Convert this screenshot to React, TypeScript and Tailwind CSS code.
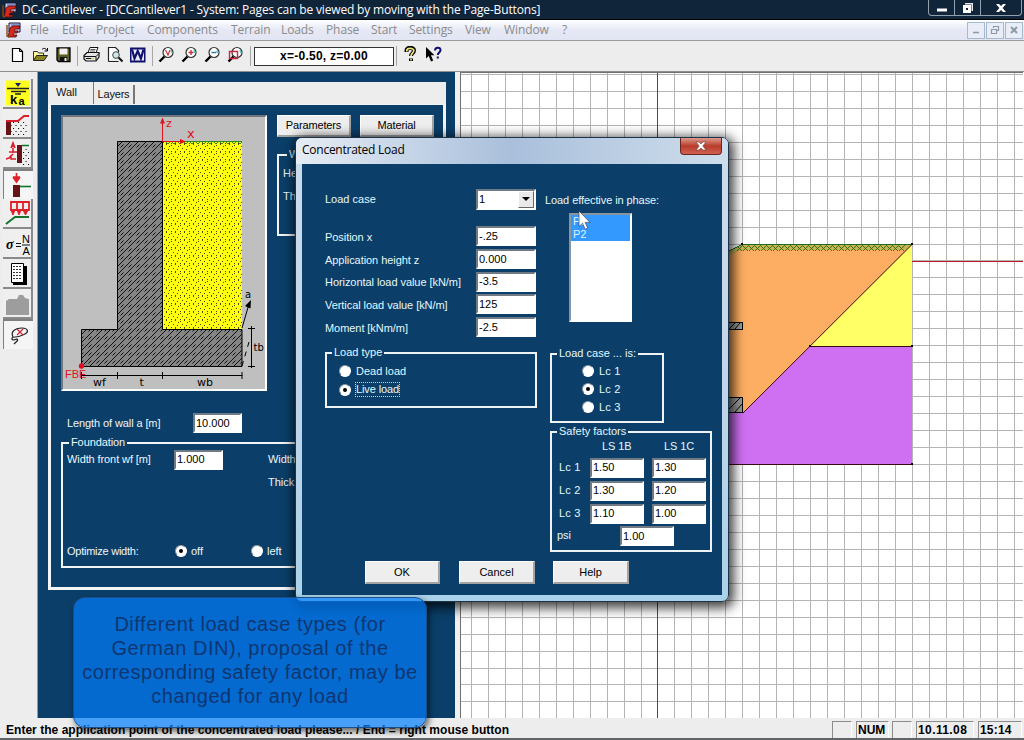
import React from 'react';

const range = (n: number) => Array.from({ length: n }, (_, i) => i);

/* ---------- shared controls ---------- */

function Field({ value, className }: { value: string; className: string }) {
  return (
    <div
      className={`flex h-5 items-center border-2 border-t-[#6f7a85] border-l-[#6f7a85] border-r-white border-b-white bg-white pl-px text-black whitespace-nowrap ${className}`}
    >
      <span>{value}</span>
    </div>
  );
}

function PushButton({ label, className }: { label: string; className: string }) {
  return (
    <div
      className={`flex items-center justify-center border-t border-l border-r-2 border-b-2 border-t-white border-l-white border-r-[#a3a3a3] border-b-[#a3a3a3] bg-[#eeeeee] text-black ${className}`}
    >
      {label}
    </div>
  );
}

function Radio({ checked }: { checked?: boolean }) {
  return (
    <span className="flex h-3 w-3 shrink-0 items-center justify-center rounded-full border border-t-[#8d99a5] border-l-[#8d99a5] border-r-white border-b-white bg-white">
      {checked && <span className="h-1 w-1 rounded-full bg-black" />}
    </span>
  );
}

/* ---------- title and menu ---------- */

function AppIcon() {
  return (
    <svg width="16" height="16" viewBox="0 0 16 16">
      <path d="M3 1h11v9H3z" fill="#c9c9e8" stroke="#15153c" />
      <path d="M5 3h8M5 5h8" stroke="#4a55a8" />
      <path d="M2 15l2-9 3-2h7l-1 3H9l-1 2h4l-1 2H8l-1 2h4l-1 2z" fill="#d8281c" stroke="#4d0707" strokeWidth="0.8" />
      <path d="M1 3v11l2 1" fill="none" stroke="#8a4a10" strokeWidth="1.4" />
    </svg>
  );
}

function TitleBar() {
  return (
    <div className="flex h-5 shrink-0 items-start border-b border-black bg-[#10243a] pl-0.5 font-['Open_Sans','Noto_Sans',sans-serif]">
      <div className="flex h-[19px] w-[20px] items-center">
        <AppIcon />
      </div>
      <div className="flex h-[19px] flex-1 items-center text-[12px] leading-none tracking-[-0.162px] whitespace-nowrap text-white">
        DC-Cantilever - [DCCantilever1 - System: Pages can be viewed by moving with the Page-Buttons]
      </div>
      <div className="mr-[2px] flex h-4 w-[94px] rounded-b-[4px] border border-t-0 border-[#93a0ad]">
        <div className="flex w-[26px] items-center justify-center border-r border-[#93a0ad]">
          <svg width="12" height="12" viewBox="0 0 12 12">
            <path d="M1 6.500h10v3H1z" fill="#fff" />
          </svg>
        </div>
        <div className="flex w-[26px] items-center justify-center border-r border-[#93a0ad]">
          <svg width="12" height="12" viewBox="0 0 12 12">
            <path d="M3 1h8v8H9.500V2.500H3z" fill="#e8e8e8" />
            <path d="M1 3h8v8H1zM4 6v2h2V6z" fill="#fff" fillRule="evenodd" />
          </svg>
        </div>
        <div className="flex flex-1 items-center justify-center">
          <svg width="12" height="12" viewBox="0 0 12 12">
            <path d="M1 2h3l2 2 2-2h3L7.600 6 11 10H8L6 8l-2 2H1l3.400-4z" fill="#fff" />
          </svg>
        </div>
      </div>
    </div>
  );
}

function MenuBar() {
  const box =
    'flex h-[17px] w-[18px] items-center justify-center border border-[#a9b9cc] bg-[#e8edf7]';
  return (
    <div className="flex h-[21px] shrink-0 items-center border-b border-[#9b9b9b] bg-linear-to-b from-white via-[#e6e8f5] to-[#e2e5f3] pl-1.5 font-['Open_Sans','Noto_Sans',sans-serif] text-[12px] leading-none tracking-[-0.1px] whitespace-nowrap text-[#8b8b8b]">
      <div className="w-6">
        <AppIcon />
      </div>
      <span className="w-8">File</span>
      <span className="w-[34px]">Edit</span>
      <span className="w-[51px]">Project</span>
      <span className="w-[84px]">Components</span>
      <span className="w-[50px]">Terrain</span>
      <span className="w-[45px]">Loads</span>
      <span className="w-[45px]">Phase</span>
      <span className="w-[38px]">Start</span>
      <span className="w-14">Settings</span>
      <span className="w-[39px]">View</span>
      <span className="w-[58px]">Window</span>
      <span className="flex-1">?</span>
      <div className="mr-px flex gap-px">
        <div className={box}>
          <svg width="10" height="10" viewBox="0 0 10 10">
            <path d="M2 7.500h6" stroke="#8d99a8" strokeWidth="1.500" />
          </svg>
        </div>
        <div className={box}>
          <svg width="10" height="10" viewBox="0 0 10 10" fill="none" stroke="#8d99a8">
            <path d="M3.500 3V1.500h5v4H7M1.500 4.500h5v4h-5z" strokeWidth="1.200" />
          </svg>
        </div>
        <div className={box}>
          <svg width="10" height="10" viewBox="0 0 10 10">
            <path d="M2 2l6 6M8 2L2 8" stroke="#8d99a8" strokeWidth="2" />
          </svg>
        </div>
      </div>
    </div>
  );
}

/* ---------- main toolbar ---------- */

function Slot({ children }: { children: React.ReactNode }) {
  return (
    <div className="flex w-[23px] shrink-0 items-center justify-center pb-[3px]">
      <svg width="17" height="17" viewBox="0 0 17 17">
        {children}
      </svg>
    </div>
  );
}

function Magnifier({ children }: { children?: React.ReactNode }) {
  return (
    <Slot>
      <path d="M6.500 10.500L1.500 15.500" stroke="#000" strokeWidth="2.400" />
      <circle cx="10" cy="6.500" r="5" fill="#fff" stroke="#333" strokeWidth="1.200" />
      <path d="M13 4l1 3" stroke="#58c8c0" strokeWidth="1.500" />
      {children}
    </Slot>
  );
}

function Separator({ className }: { className: string }) {
  return (
    <div className={`flex h-5 shrink-0 justify-center ${className}`}>
      <div className="w-px bg-[#a8a8a8]" />
    </div>
  );
}

function Toolbar() {
  return (
    <div className="flex h-[30px] shrink-0 items-center bg-[#ededed] pl-1.5">
      <Slot>
        <path d="M3.500 2.500h7l3 3v10h-10z" fill="#fff" stroke="#000" strokeWidth="1.200" />
        <path d="M10.500 2.500v3h3" fill="none" stroke="#000" />
      </Slot>
      <Slot>
        <path d="M1.500 14V5.500h4l1 1.500h5v3" fill="#fbf7a0" stroke="#333" />
        <path d="M1.500 14.500l3-5h11l-3.500 5z" fill="#8a8420" stroke="#222" />
        <path d="M10 3.500c2-2 4-1 5 1M15.500 2v3h-3" fill="none" stroke="#000" />
      </Slot>
      <Slot>
        <path d="M2 2h13v13.500H3.500L2 14z" fill="#5c5c22" stroke="#000" strokeWidth="1.300" />
        <path d="M4.500 2.500h8v6h-8z" fill="#efefef" />
        <path d="M5 11h7v4.500H5z" fill="#111" />
        <path d="M9.500 12h2v3h-2z" fill="#eee" />
      </Slot>
      <Separator className="w-[5px]" />
      <Slot>
        <path d="M5 6.500L7 1.500h8l-2 5" fill="#fff" stroke="#111" />
        <path d="M7.500 3.500h5M7 5h5" stroke="#555" />
        <path d="M1 9.500l3-3h12v4.500l-3 4H3L1 13z" fill="#e5e5e5" stroke="#111" strokeWidth="1.200" />
        <path d="M1 10.500h12v4M13 10.500l3-3M3 12.500h8" stroke="#111" fill="none" />
        <path d="M8 12h3v1H8z" fill="#d8d020" />
      </Slot>
      <Slot>
        <path d="M2.500 15.500v-14h7l3 3v2M2.500 15.500h10" fill="#fff" stroke="#222" strokeWidth="1.200" />
        <circle cx="10" cy="9" r="3.300" fill="#cfe8ea" stroke="#444" />
        <path d="M12.500 11.500l4 4" stroke="#111" strokeWidth="2" />
      </Slot>
      <Slot>
        <path d="M1 1.500h15.500v15H1z" fill="#10106c" />
        <path d="M2.500 3.500h12.500v11H2.500z" fill="#e8e8f4" />
        <path d="M3 3.500l2.500 9 3.200-7.500 3.200 7.500 2.600-9" stroke="#10106c" strokeWidth="2.200" fill="none" />
      </Slot>
      <Separator className="w-1.5" />
      <Magnifier>
        <path d="M7.500 4l2.500 5 2-5" stroke="#c8323c" strokeWidth="1.200" fill="none" />
      </Magnifier>
      <Magnifier>
        <path d="M7.500 6.500h5M10 4v5" stroke="#c8323c" strokeWidth="1.400" />
      </Magnifier>
      <Magnifier>
        <path d="M7.500 6.500h5" stroke="#2a7fa0" strokeWidth="1.400" />
      </Magnifier>
      <Magnifier>
        <path d="M2.500 5.500h8v7h-8z" stroke="#d02840" strokeWidth="1.400" fill="none" />
      </Magnifier>
      <Separator className="w-[7px]" />
      <div className="flex h-[19px] w-[140px] items-center justify-center border border-[#333] bg-white text-[12px] leading-none font-bold tracking-[0.25px] text-black">
        x=-0.50, z=0.00
      </div>
      <Separator className="w-[5px]" />
      <Slot>
        <path d="M4.500 6V4.500c0-3.500 7.500-3.500 7.500 0C12 7 9 7.200 9 10M9 12.500v2.500" fill="none" stroke="#000" strokeWidth="4" />
        <path d="M4.800 5.500V4.500c0-2.800 7-2.800 7 0C11.800 7 9 7.200 9 10M9 13v1.500" fill="none" stroke="#f4e87a" strokeWidth="1.700" />
      </Slot>
      <Slot>
        <path d="M1 1v11.500l2.700-2.500 2.300 5.500 2.200-1-2.300-5.200h3.600z" fill="#000" />
        <path d="M10 4.500c0-4 5.500-3.500 5.500-.5 0 2.500-2.700 2.500-2.700 5M12.800 10.500v2" fill="none" stroke="#10106c" strokeWidth="2" />
      </Slot>
    </div>
  );
}

/* ---------- left tool strip ---------- */

function ToolButton({ pressed, children }: { pressed?: boolean; children: React.ReactNode }) {
  return (
    <div
      className={
        pressed
          ? 'h-[30px] w-[30px] border-t-2 border-l border-t-[#808080] border-l-[#808080] bg-[#f5f5f5]'
          : 'h-[30px] w-[30px] border-r-2 border-b-2 border-r-[#8a8a8a] border-b-[#8a8a8a] bg-[#efefef]'
      }
    >
      <svg width="28" height="28" viewBox="0 0 28 28">
        {children}
      </svg>
    </div>
  );
}

function ToolStrip() {
  return (
    <div className="w-[38px] shrink-0 border-r border-[#9a9a9a] bg-[#ededed] pt-[7px] pl-[3px]">
      <ToolButton>
        <rect x="3" y="1.500" width="24" height="25" fill="#ffff20" />
        <path d="M12 4h6l-3 4z" fill="#182060" />
        <path d="M4 9.500h22M8 12.500h15M12 15h6" stroke="#222" strokeWidth="1.300" />
        <text x="7" y="25" fontSize="13" fontWeight="bold" fontFamily="Liberation Sans">k</text>
        <text x="15.500" y="26" fontSize="11" fontWeight="bold" fontFamily="Liberation Sans">a</text>
      </ToolButton>
      <ToolButton>
        <rect x="8" y="12" width="17" height="14" fill="url(#dots)" />
        <path d="M3 12h5v14H3z" fill="#661418" />
        <path d="M3 12h12l6-5h5" stroke="#d8202c" strokeWidth="2" fill="none" />
      </ToolButton>
      <ToolButton>
        <rect x="18" y="8" width="8" height="18" fill="url(#dots)" />
        <path d="M14 6h5v18h-5z" fill="#661418" />
        <path d="M19 6.500h7" stroke="#107428" strokeWidth="1.500" />
        <path d="M8 9l2-5 2 5M8.500 7.500h3M10 9v5M6 13h8M10 15l-4 4-3 1M13 20H8v-4" stroke="#d8202c" strokeWidth="1.600" fill="none" />
      </ToolButton>
      <ToolButton pressed>
        <path d="M12.500 2v8M9 6l3.500 5 3.500-5M9 6h7" stroke="#e02028" strokeWidth="1.600" fill="#e02028" />
        <path d="M9 14h7v12H9z" fill="#661418" />
        <path d="M16 15.500h11" stroke="#107428" strokeWidth="1.600" />
      </ToolButton>
      <ToolButton>
        <path d="M8 3h18v8H8zM14 3v8M20 3v8" stroke="#e02028" strokeWidth="1.800" fill="none" />
        <path d="M8 11h4l-2 5zM14 11h4l-2 5zM20 11h5l-2.500 5z" fill="#e02028" stroke="#e02028" />
        <path d="M3 25l9-7h14" stroke="#18742c" strokeWidth="2" fill="none" />
      </ToolButton>
      <ToolButton>
        <text x="3" y="20" fontSize="14" fontWeight="bold" fontStyle="italic" fontFamily="Liberation Serif">σ</text>
        <path d="M13 14.500h5M13 17.500h5M19 16h8" stroke="#111" strokeWidth="1.100" />
        <text x="19" y="14" fontSize="11" fontFamily="Liberation Sans">N</text>
        <text x="19.500" y="26" fontSize="11" fontFamily="Liberation Sans">A</text>
      </ToolButton>
      <ToolButton>
        <path d="M10 7h14v19H10z" fill="#000" />
        <path d="M8.500 4.500h12v19h-12z" fill="#fff" stroke="#000" />
        <path d="M10 7.500h9M10 10.500h9M10 13.500h9M10 16.500h9M10 19.500h9" stroke="#333" strokeDasharray="2 1" />
      </ToolButton>
      <ToolButton>
        <path d="M3 26V12l3-2h8l2-4h4l2 3 4 1v16z" fill="#9d9d9d" />
      </ToolButton>
      <ToolButton pressed>
        <path d="M9 16c-3-6 3-9 9-9s7 4 3 6-6 3-10 3c-4 0-4 3-1 3l3-1c2 1-1 3-3 5" stroke="#222" strokeWidth="1.200" fill="none" />
        <path d="M13 8l6 6M19 8l-6 6" stroke="#d02840" strokeWidth="1.200" />
      </ToolButton>
    </div>
  );
}

/* ---------- wall sketch ---------- */

function WallSketch() {
  return (
    <svg
      className="block"
      width="202"
      height="272"
      viewBox="63 117 202 272"
      fontFamily="DejaVu Sans"
      fontSize="11"
    >
      <defs>
        <pattern id="dots" width="5" height="6" patternUnits="userSpaceOnUse">
          <path d="M0 1h1.100v1H0zM2.500 4h1.100v1H2.500z" fill="#111" />
        </pattern>
        <pattern id="sand" width="9" height="8" patternUnits="userSpaceOnUse">
          <path d="M0 1h1v1H0zM4 0h1v1H4zM7 2h1v1H7zM2 4h1v1H2zM6 5h1v1H6zM0 7h1v1H0zM4 7h1v1H4z" fill="#4a4a00" />
        </pattern>
        <pattern id="concrete" width="8" height="8" patternUnits="userSpaceOnUse">
          <path d="M-1 9L9 -1M-1 1L1 -1M7 9L9 7" stroke="#050505" strokeWidth="0.900" />
          <path d="M0.500 3.500L3.500 0.500" stroke="#050505" strokeWidth="0.900" />
        </pattern>
        <pattern id="turf" width="6" height="4" patternUnits="userSpaceOnUse">
          <path d="M0 4l3-3M3 1l3 3" stroke="#2c7a10" strokeWidth="0.900" />
        </pattern>
      </defs>
      <path d="M162 142h80v187h-80z" fill="#ffff10" />
      <path d="M162 142h80v187h-80z" fill="url(#sand)" />
      <path d="M163 142h79v3h-79z" fill="url(#turf)" />
      <path d="M163 141.500h79" stroke="#2c8a20" />
      <path d="M117.500 141.500h45v188h79.500v37H81.500v-37h36z" fill="#858585" />
      <path d="M117.500 141.500h45v188h79.500v37H81.500v-37h36z" fill="url(#concrete)" stroke="#000" />
      <path d="M162.500 141.500V121M162.500 141.500h20" stroke="#e01020" />
      <path d="M162.500 117.500l2.500 6h-5zM186 141.500l-6 2.500v-5z" fill="#e01020" />
      <g fill="#e01020">
        <text x="166" y="127">z</text>
        <text x="187" y="138" fontSize="13">x</text>
        <text x="65" y="378" fontFamily="Liberation Sans">FBE</text>
        <circle cx="81.500" cy="366" r="2.700" />
      </g>
      <g stroke="#000" fill="none">
        <path d="M81.500 375.500h161M81.500 372v7M117.500 372v7M162.500 372v7M242 372v7" />
        <path d="M251.500 326v42M248 328.500h7M248 366.500h7" />
        <path d="M242 328l7-24" />
        <path d="M242 366l7-24" strokeDasharray="5 5" />
      </g>
      <path d="M251 300l-6 6 5.500 2.500z" />
      <text x="245" y="298" fontSize="10">a</text>
      <text x="253.500" y="351" fontSize="10">tb</text>
      <text x="93" y="386">wf</text>
      <text x="139.500" y="386">t</text>
      <text x="197" y="386">wb</text>
    </svg>
  );
}

/* ---------- wall page ---------- */

function WallPage() {
  return (
    <div className="w-[417px] shrink-0 bg-[#0b3f69] pt-2.5 pl-2.5 text-[11px] leading-none text-[#eef6fb]">
      <div className="h-[509px] w-[398px]">
        <div className="flex h-[22px] items-end bg-[#ededed] text-[#111]">
          <div className="flex h-[22px] w-[46px] items-center border-r border-[#777] pb-0.5 pl-2">Wall</div>
          <div className="flex h-[19px] w-[41px] items-center justify-center border-r-2 border-[#777] tracking-[-0.2px]">Layers</div>
        </div>
        <div className="h-[486px] border-x-[3px] border-t border-b-[3px] border-[#f2f4f5] pt-2.5 pl-2.5">
          <div className="flex">
            <div className="h-[276px] w-[206px] border-2 border-t-[#70767c] border-l-[#70767c] border-r-white border-b-white bg-[#bfbfbf]">
              <WallSketch />
            </div>
            <div className="pl-2.5">
              <div className="flex gap-[9px] tracking-[-0.15px]">
                <PushButton label="Parameters" className="h-[22px] w-[74px]" />
                <PushButton label="Material" className="h-[22px] w-[74px]" />
              </div>
              <fieldset className="mt-3 h-[87px] w-[157px] border-2 border-[#f2f4f5] pt-0.5 pl-1">
                <legend className="ml-1 px-0.5">W</legend>
                <div className="flex h-[23px] items-center">He</div>
                <div className="flex h-[23px] items-center">Th</div>
              </fieldset>
            </div>
          </div>
          <div className="mt-[22px] flex h-5 items-center pl-[6px]">
            <span className="w-[126px] tracking-[-0.1px] whitespace-nowrap">Length of wall a [m]</span>
            <Field value="10.000" className="w-[49px]" />
          </div>
          <fieldset className="mt-1 h-[131px] w-[374px] border-2 border-[#f2f4f5] pl-1">
            <legend className="ml-0.5 px-0.5 tracking-[-0.1px]">Foundation</legend>
            <div className="flex h-[23px] items-center">
              <span className="w-[107px] tracking-[-0.1px] whitespace-nowrap">Width front wf [m]</span>
              <Field value="1.000" className="w-[49px]" />
              <span className="ml-[45px] tracking-[-0.1px] whitespace-nowrap">Width</span>
            </div>
            <div className="flex h-[23px] items-center pl-[201px]">Thick</div>
            <div className="mt-[47px] flex h-5 items-center">
              <span className="w-[108px] tracking-[-0.25px]">Optimize width:</span>
              <Radio checked />
              <span className="ml-1 w-[60px]">off</span>
              <Radio />
              <span className="ml-1">left</span>
            </div>
          </fieldset>
        </div>
      </div>
    </div>
  );
}

/* ---------- drawing canvas ---------- */

function Canvas() {
  return (
    <div className="flex-1 border-t border-l border-[#707070] bg-white">
      <svg className="block" width="562" height="645" viewBox="461 73 562 645" shapeRendering="crispEdges">
        {range(33).map((k) => (
          <rect key={`v${k}`} x={Math.floor(471.3 + 16.97 * k)} y="73" width="1" height="645" fill="#b4b4b4" />
        ))}
        {range(38).map((k) => (
          <rect key={`h${k}`} x="461" y={Math.floor(74.4 + 16.96 * k)} width="562" height="1" fill="#b4b4b4" />
        ))}
        <rect x="657" y="73" width="1" height="645" fill="#c01828" />
        <rect x="461" y="261" width="562" height="1" fill="#c01828" />
        <path d="M700 250h30l12-6h170L743 413H700z" fill="#fdae62" />
        <path d="M912 244v102H810z" fill="#ffff66" />
        <path d="M743 413l67-67h102v118H700v-51z" fill="#cf70f3" />
        <path d="M722 256l8-1 12-5h164l6-6H742l-12 6h-8z" fill="#c9b455" />
        <g stroke="#2c6a10" strokeWidth="0.900" shapeRendering="auto">
          {range(28).map((k) => (
            <path key={k} d={`M${737 + k * 6} 251l6-6M${737 + k * 6} 246l5 5`} />
          ))}
        </g>
        <path d="M725 250.500h5l12-6h170" stroke="#1d6a18" fill="none" />
        <g shapeRendering="auto" stroke="#3a0a12" fill="none">
          <path d="M912 244.500L743 413" />
          <path d="M810 346.500h102M700 464.500h212" />
        </g>
        <path d="M911 243h2v2h-2zM911 345h2v2h-2zM911 463h2v2h-2zM809 345h2v2h-2zM741 243h2v2h-2z" fill="#000" />
        <path d="M715.500 322.500h27v7h-27zM715.500 397.500h27v15h-27z" fill="#9c9c9c" stroke="#000" />
        <path d="M729 329l6-6M735 329l5-6M729 409l11-11M735 412l7-8" stroke="#000" shapeRendering="auto" />
      </svg>
    </div>
  );
}

/* ---------- dialog ---------- */

function LoadRow({ label, value, className }: { label: string; value: string; className: string }) {
  return (
    <div className={`flex h-[22.700px] items-center whitespace-nowrap ${className}`}>
      <span className="w-[151px] pt-0.5 tracking-[-0.06px]">{label}</span>
      <Field value={value} className="w-[60px]" />
    </div>
  );
}

function FactorRow({ label, a, b }: { label: string; a: string; b: string }) {
  return (
    <div className="flex h-[23px] items-center">
      <span className="w-[31px] tracking-[0.2px]">{label}</span>
      <Field value={a} className="mr-[8px] w-[54px]" />
      <Field value={b} className="w-[54px]" />
    </div>
  );
}

function LoadDialog() {
  return (
    <div className="absolute top-[137px] left-[295px] flex h-[465px] w-[434px] flex-col rounded-[7px] border border-[#1d3347] bg-linear-to-b from-[#cddcec] via-[#c3d5ea] to-[#a9d2e8] px-[6px] pb-[6px] shadow-[2px_3px_12px_3px_rgba(0,0,0,0.75)]">
      <div className="-mx-[6px] flex h-[26px] items-start rounded-t-[6px] bg-linear-to-r from-[#e6ecf4] via-[#a9bfdb] to-[#cfdeec] pl-[6px]">
        <div className="flex h-[24px] flex-1 items-center font-['Open_Sans','Noto_Sans',sans-serif] text-[12px] leading-none tracking-[-0.25px] text-black">
          Concentrated Load
        </div>
        <div className="mr-[6px] flex h-[17px] w-[42px] items-center justify-center rounded-b-[4px] border border-t-0 border-[#6d2420] bg-linear-to-b from-[#dc9a8c] via-[#b83a2a] to-[#cf6252]">
          <svg width="12" height="10" viewBox="0 0 12 10">
            <path d="M1 1h3l2 2 2-2h3L7.800 5 11 9H8L6 7 4 9H1l3.200-4z" fill="#fff" stroke="#6a4040" strokeWidth="0.600" />
          </svg>
        </div>
      </div>
      <div className="flex-1 bg-[#0b3f69] pt-[24px] pl-[23px] text-[11px] leading-none text-[#e4f8fb]">
        <div className="flex h-[364px]">
          <div className="w-[212px]">
            <div className="flex h-[22px] items-center">
              <span className="w-[151px] pt-px">Load case</span>
              <div className="flex h-[21px] w-[60px] items-center border-2 border-t-[#6f7a85] border-l-[#6f7a85] border-r-white border-b-white bg-white pl-px text-black">
                <span className="flex-1">1</span>
                <span className="flex h-[17px] w-4 items-center justify-center border border-t-white border-l-white border-r-[#666] border-b-[#666] bg-[#e9e9e9]">
                  <svg width="8" height="4" viewBox="0 0 8 4">
                    <path d="M0 0h8L4 4z" />
                  </svg>
                </span>
              </div>
            </div>
            <LoadRow label="Position x" value="-.25" className="mt-[15px]" />
            <LoadRow label="Application height z" value="0.000" className="" />
            <LoadRow label="Horizontal load value [kN/m]" value="-3.5" className="" />
            <LoadRow label="Vertical load value [kN/m]" value="125" className="" />
            <LoadRow label="Moment [kNm/m]" value="-2.5" className="" />
            <fieldset className="mt-[9px] h-[61px] border-2 border-[#eef3f5] pl-3">
              <legend className="-ml-[7px] px-0.5">Load type</legend>
              <div className="mt-[3px] flex h-[19px] items-center">
                <Radio />
                <span className="ml-[5px] pt-px">Dead load</span>
              </div>
              <div className="flex h-[19px] items-center">
                <Radio checked />
                <span className="ml-1 border border-dotted border-[#c6d2dc] py-px tracking-[-0.1px]">Live load</span>
              </div>
            </fieldset>
          </div>
          <div className="pl-[13px]">
            <div className="-ml-[5px] flex h-[25px] items-center tracking-[-0.08px]">Load effective in phase:</div>
            <div className="ml-[19px] h-[109px] w-[63px] border-2 border-t-[#8a949c] border-l-[#8a949c] border-r-white border-b-white bg-white text-[#dff3ff]">
              <div className="bg-[#3399ff] pl-0.5">
                <div className="flex h-[13px] items-center">P1</div>
                <div className="flex h-[13px] items-center">P2</div>
              </div>
            </div>
            <fieldset className="mt-[26px] h-[75px] w-[114px] border-2 border-[#eef3f5] pl-[30px]">
              <legend className="-ml-[25px] px-0.5">Load case ... is:</legend>
              <div className="mt-[3px] flex h-[18px] items-center tracking-[0.2px]">
                <Radio />
                <span className="ml-[5px]">Lc 1</span>
              </div>
              <div className="flex h-[18px] items-center tracking-[0.2px]">
                <Radio checked />
                <span className="ml-[5px]">Lc 2</span>
              </div>
              <div className="flex h-[18px] items-center tracking-[0.2px]">
                <Radio />
                <span className="ml-[5px]">Lc 3</span>
              </div>
            </fieldset>
            <fieldset className="mt-[3px] h-[126px] w-[162px] border-2 border-[#eef3f5] pl-[7px]">
              <legend className="-ml-0.5 px-0.5">Safety factors</legend>
              <div className="flex h-[19px] items-center pl-[43px] tracking-[-0.1px]">
                <span className="w-[62px]">LS 1B</span>
                <span>LS 1C</span>
              </div>
              <FactorRow label="Lc 1" a="1.50" b="1.30" />
              <FactorRow label="Lc 2" a="1.30" b="1.20" />
              <FactorRow label="Lc 3" a="1.10" b="1.00" />
              <div className="flex h-[22px] items-center">
                <span className="-ml-0.5 w-[63px] pb-0.5">psi</span>
                <Field value="1.00" className="w-[54px]" />
              </div>
            </fieldset>
          </div>
        </div>
        <div className="mt-[9px] flex pl-10">
          <PushButton label="OK" className="mr-[19px] h-[23px] w-[75px]" />
          <PushButton label="Cancel" className="mr-[18px] h-[23px] w-[76px]" />
          <PushButton label="Help" className="h-[23px] w-[76px]" />
        </div>
      </div>
    </div>
  );
}

function Cursor() {
  return (
    <svg className="absolute top-[210px] left-[578px]" width="14" height="21" viewBox="0 0 14 21">
      <path d="M1 1v15.500l3.600-3.300 2.500 6 2.600-1.100-2.500-5.700H12z" fill="#fff" stroke="#445" strokeWidth="0.700" />
    </svg>
  );
}

function Callout() {
  return (
    <div className="absolute top-[597px] left-[73px] h-[131px] w-[354px] rounded-[12px] border border-[#1b4f8c] bg-[rgba(2,126,252,0.7)] pt-[14px] text-center font-['Liberation_Sans',sans-serif] text-[20px] leading-6 tracking-[0.530px] whitespace-nowrap text-[#0e3670] shadow-[2px_3px_6px_rgba(0,0,0,0.6)]">
      <div>Different load case types (for</div>
      <div>German DIN), proposal of the</div>
      <div>corresponding safety factor, may be</div>
      <div>changed for any load</div>
    </div>
  );
}

/* ---------- status bar ---------- */

function StatusBar() {
  const cell =
    'flex h-[17px] items-center border-t border-l border-[#8c8c8c] border-r border-r-white whitespace-nowrap';
  return (
    <div className="flex h-[22px] shrink-0 items-center border-b-2 border-[#5f6468] bg-[#ededed] pt-0.5 pl-1.5 text-[12px] leading-none font-bold text-black">
      <span className="w-[826px] pt-px tracking-[0.03px] whitespace-nowrap">
        Enter the application point of the concentrated load please... / End = right mouse button
      </span>
      <div className={`${cell} mr-1 w-5`} />
      <div className={`${cell} mr-[3px] w-[33px] pl-px`}>NUM</div>
      <div className={`${cell} mr-1 w-5`} />
      <div className={`${cell} mr-1 w-[58px] pl-px tracking-[0.4px]`}>10.11.08</div>
      <div className={`${cell} w-11 pl-px tracking-[0.2px]`}>15:14</div>
    </div>
  );
}

export default function App() {
  return (
    <div className="relative flex h-[740px] w-[1024px] flex-col overflow-hidden bg-[#ededed] font-['Liberation_Sans',Arial,sans-serif]">
      <TitleBar />
      <MenuBar />
      <Toolbar />
      <div className="flex h-[647px] shrink-0 border-t border-[#8f8f8f]">
        <ToolStrip />
        <WallPage />
        <div className="w-[5px] shrink-0 bg-[#f0f0f0]" />
        <Canvas />
        <div className="w-px shrink-0 bg-white" />
      </div>
      <StatusBar />
      <LoadDialog />
      <Cursor />
      <Callout />
    </div>
  );
}
